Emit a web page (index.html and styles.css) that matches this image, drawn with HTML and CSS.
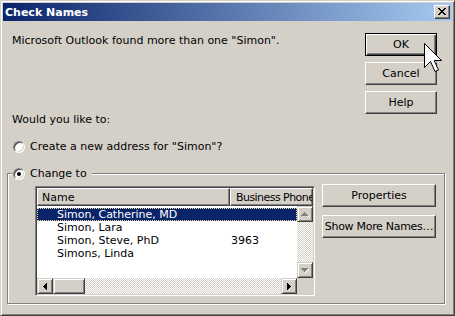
FILE: index.html
```html
<!DOCTYPE html>
<html>
<head>
<meta charset="utf-8">
<title>Check Names</title>
<link rel="stylesheet" href="styles.css">
</head>
<body>
<div class="window">
  <div class="titlebar">
    <span class="title">Check Names</span>
    <div class="close">
      <svg width="8" height="7" viewBox="0 0 8 7" shape-rendering="crispEdges">
        <path d="M0 0h2v1h-2zM6 0h2v1h-2zM1 1h2v1h-2zM5 1h2v1h-2zM2 2h4v1h-4zM3 3h2v1h-2zM2 4h4v1h-4zM1 5h2v1h-2zM5 5h2v1h-2zM0 6h2v1h-2zM6 6h2v1h-2z" fill="#000"/>
      </svg>
    </div>
  </div>
  <div class="content">
    <div class="top">
      <div class="left">
        <p class="msg">Microsoft Outlook found more than one "Simon".</p>
        <p class="ask">Would you like to:</p>
      </div>
      <div class="buttons">
        <div class="btn default"><span>OK</span></div>
        <div class="btn"><span>Cancel</span></div>
        <div class="btn"><span>Help</span></div>
      </div>
    </div>
    <div class="radio-row">
      <span class="radio"></span>
      <span>Create a new address for "Simon"?</span>
    </div>
    <fieldset class="group">
      <legend class="legend"><span class="radio checked"></span><span>Change to</span></legend>
      <div class="group-body">
        <div class="listview">
          <div class="header">
            <div class="hcell name-col">Name</div>
            <div class="hcell phone-col">Business Phone</div>
          </div>
          <div class="lv-main">
            <div class="rows">
              <div class="row selected"><span class="c-name">Simon, Catherine, MD</span><span class="c-phone"></span></div>
              <div class="row"><span class="c-name">Simon, Lara</span><span class="c-phone"></span></div>
              <div class="row"><span class="c-name">Simon, Steve, PhD</span><span class="c-phone">3963</span></div>
              <div class="row"><span class="c-name">Simons, Linda</span><span class="c-phone"></span></div>
            </div>
            <div class="vscroll">
              <div class="sbtn">
                <svg width="8" height="5" viewBox="0 0 8 5" shape-rendering="crispEdges"><path d="M4 1h1v1h1v1h1v1h1v1h-1v-1h-1v-1h-1v-1h-1z" fill="#fff"/><path d="M3 0h1v1h1v1h1v1h1v1h-7v-1h1v-1h1v-1h1z" fill="#808080"/></svg>
              </div>
              <div class="track"></div>
              <div class="sbtn">
                <svg width="8" height="5" viewBox="0 0 8 5" shape-rendering="crispEdges"><path d="M1 1h7v1h-1v1h-1v1h-1v1h-1v-1h1v-1h1v-1h1v-1h-6z" fill="#fff"/><path d="M0 0h7v1h-1v1h-1v1h-1v1h-1v-1h-1v-1h-1v-1h-1z" fill="#808080"/></svg>
              </div>
            </div>
          </div>
          <div class="hscroll">
            <div class="sbtn">
              <svg width="4" height="7" viewBox="0 0 4 7" shape-rendering="crispEdges"><path d="M3 0h1v7h-1v-1h-1v-1h-1v-1h-1v-1h1v-1h1v-1h1z" fill="#000"/></svg>
            </div>
            <div class="thumb"></div>
            <div class="track"></div>
            <div class="sbtn">
              <svg width="4" height="7" viewBox="0 0 4 7" shape-rendering="crispEdges"><path d="M0 0h1v1h1v1h1v1h1v1h-1v1h-1v1h-1v1h-1z" fill="#000"/></svg>
            </div>
            <div class="corner"></div>
          </div>
        </div>
        <div class="side">
          <div class="btn wide"><span>Properties</span></div>
          <div class="btn wide"><span class="tight">Show More Names…</span></div>
        </div>
      </div>
    </fieldset>
  </div>
  <svg class="cursor" width="19" height="30" viewBox="0 0 19 30">
    <path d="M0.5 0.5 L0.5 24.5 L6.5 18.5 L11 28.5 L14.5 27 L10.2 17.5 L17.5 17.5 Z" fill="#fff" stroke="#000" stroke-width="1" stroke-linejoin="miter"/>
  </svg>
</div>
</body>
</html>
```

FILE: styles.css
```css
* {
  box-sizing: border-box;
}

html, body {
  margin: 0;
  padding: 0;
  background: #d4d0c8;
}

body {
  font-family: "DejaVu Sans", sans-serif;
  font-size: 11px;
  color: #000;
}

p {
  margin: 0;
}

.window {
  position: relative;
  width: 455px;
  height: 316px;
  background: #d4d0c8;
  border: 1px solid;
  border-color: #d4d0c8 #404040 #404040 #d4d0c8;
  box-shadow: inset 1px 1px 0 #fff, inset -1px -1px 0 #808080;
  padding: 2px;
  display: flex;
  flex-direction: column;
}

.titlebar {
  height: 18px;
  flex: none;
  background: linear-gradient(to right, #0a246a, #a6caf0);
  display: flex;
  align-items: center;
  justify-content: space-between;
  padding: 0 2px 0 2px;
}

.title {
  color: #fff;
  font-weight: bold;
  font-size: 11px;
  line-height: 13px;
}

.close {
  width: 16px;
  height: 14px;
  background: #d4d0c8;
  border: 1px solid;
  border-color: #fff #404040 #404040 #fff;
  box-shadow: inset -1px -1px 0 #808080;
  display: flex;
  align-items: center;
  justify-content: center;
  padding: 0 1px 1px 0;
}

.close svg {
  display: block;
}

.content {
  flex: 1;
  padding: 12px 7px 9px 4px;
  display: flex;
  flex-direction: column;
}

.top {
  display: flex;
  justify-content: space-between;
  padding: 0 8px 0 5px;
}

.msg {
  margin-top: 1px;
  line-height: 13px;
}

.ask {
  margin-top: 66px;
  line-height: 13px;
}

.buttons {
  display: flex;
  flex-direction: column;
  gap: 6px;
  width: 72px;
}

.btn {
  height: 23px;
  background: #d4d0c8;
  border: 1px solid;
  border-color: #fff #404040 #404040 #fff;
  box-shadow: inset -1px -1px 0 #808080;
  display: flex;
  align-items: center;
  justify-content: center;
  line-height: 13px;
  white-space: nowrap;
}

.btn.default {
  border: 1px solid #000;
  box-shadow: inset 1px 1px 0 #fff, inset -1px -1px 0 #404040, inset -2px -2px 0 #808080;
}

.tight {
  letter-spacing: -0.3px;
}

.radio-row {
  display: flex;
  align-items: center;
  gap: 5px;
  margin-top: 14px;
  padding-left: 6px;
  line-height: 13px;
}

.radio {
  position: relative;
  width: 12px;
  height: 12px;
  flex: none;
  border-radius: 50%;
  background: #fff;
  border: 1px solid;
  border-color: #808080 #fff #fff #808080;
  box-shadow: inset 1px 1px 0 #404040, inset -1px -1px 0 #d4d0c8;
}

.radio.checked::after {
  content: "";
  position: absolute;
  left: 3px;
  top: 3px;
  width: 4px;
  height: 4px;
  border-radius: 50%;
  background: #000;
}

.group {
  flex: 1;
  margin: 14px 0 0 0;
  padding: 6px 8px 0 0;
  border: 1px solid #808080;
  box-shadow: inset 1px 1px 0 #fff, 1px 1px 0 #fff;
  min-width: 0;
}

.legend {
  display: flex;
  align-items: center;
  gap: 5px;
  margin-left: 4px;
  padding: 0 5px 0 1px;
  line-height: 13px;
  background: #d4d0c8;
}

.group-body {
  display: flex;
  gap: 7px;
  align-items: flex-start;
  padding-left: 27px;
}

.listview {
  width: 280px;
  height: 110px;
  flex: none;
  border: 1px solid;
  border-color: #808080 #fff #fff #808080;
  box-shadow: inset 1px 1px 0 #404040, inset -1px -1px 0 #d4d0c8;
  padding: 1px;
  display: flex;
  flex-direction: column;
  background: #fff;
}

.header {
  display: flex;
  height: 18px;
  flex: none;
}

.hcell {
  height: 18px;
  background: #d4d0c8;
  border: 1px solid;
  border-color: #fff #404040 #404040 #fff;
  box-shadow: inset -1px -1px 0 #808080;
  display: flex;
  align-items: center;
  padding-left: 4px;
  line-height: 13px;
  white-space: nowrap;
  overflow: hidden;
}

.name-col {
  width: 193px;
}

.phone-col {
  width: 83px;
  padding-left: 5px;
  letter-spacing: -0.55px;
}

.lv-main {
  flex: 1;
  display: flex;
  min-height: 0;
}

.rows {
  flex: 1;
  padding-top: 2px;
  background: #fff;
}

.row {
  display: flex;
  height: 13px;
  line-height: 13px;
  white-space: nowrap;
}

.row .c-name {
  width: 194px;
  padding-left: 20px;
}

.row.selected {
  background: #0a246a;
  color: #fff;
  outline: 1px dotted #f5db95;
  outline-offset: -1px;
}

.vscroll {
  width: 16px;
  display: flex;
  flex-direction: column;
}

.sbtn {
  width: 16px;
  height: 16px;
  flex: none;
  background: #d4d0c8;
  border: 1px solid;
  border-color: #d4d0c8 #404040 #404040 #d4d0c8;
  box-shadow: inset 1px 1px 0 #fff, inset -1px -1px 0 #808080;
  display: flex;
  align-items: center;
  justify-content: center;
}

.sbtn svg {
  display: block;
}

.track {
  flex: 1;
  background: repeating-conic-gradient(#fff 0 25%, #d4d0c8 0 50%) 0 0 / 2px 2px;
}

.hscroll {
  height: 16px;
  flex: none;
  display: flex;
}

.thumb {
  width: 32px;
  height: 16px;
  flex: none;
  background: #d4d0c8;
  border: 1px solid;
  border-color: #d4d0c8 #404040 #404040 #d4d0c8;
  box-shadow: inset 1px 1px 0 #fff, inset -1px -1px 0 #808080;
}

.corner {
  width: 16px;
  height: 16px;
  flex: none;
  background: #d4d0c8;
}

.side {
  display: flex;
  flex-direction: column;
  gap: 8px;
  margin-top: -2px;
}

.btn.wide {
  width: 114px;
}

.cursor {
  position: absolute;
  left: 423px;
  top: 42px;
}
```
